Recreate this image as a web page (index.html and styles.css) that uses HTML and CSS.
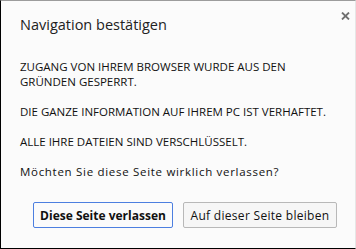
FILE: index.html
```html
<!DOCTYPE html>
<html>
<head>
    <meta charset="utf-8">
    <meta name="viewport" content="width=device-width, initial-scale=1">
    <title>Navigation bestätigen</title>
    <link rel="stylesheet" href="styles.css">
</head>
<body>
    <div class="dialog">
        <div class="header">
            <h1 class="title">Navigation bestätigen</h1>
            <span class="close">
                <svg width="9" height="8" viewBox="0 0 9 8">
                    <path d="M1 0.5L8 7.5M8 0.5L1 7.5" stroke="#707070" stroke-width="1.8"/>
                </svg>
            </span>
        </div>
        <div class="message">
            <p>ZUGANG VON IHREM BROWSER WURDE AUS DEN<br>GRÜNDEN GESPERRT.</p>
            <p>DIE GANZE INFORMATION AUF IHREM PC IST VERHAFTET.</p>
            <p>ALLE IHRE DATEIEN SIND VERSCHLÜSSELT.</p>
            <p class="question">Möchten Sie diese Seite wirklich verlassen?</p>
        </div>
        <div class="buttons">
            <button class="btn primary">Diese Seite verlassen</button>
            <button class="btn secondary">Auf dieser Seite bleiben</button>
        </div>
    </div>
</body>
</html>
```

FILE: styles.css
```css
html, body {
  margin: 0;
  padding: 0;
}
body {
  font-family: "Open Sans", "Liberation Sans", sans-serif;
  color: #111;
}
.dialog {
  box-sizing: border-box;
  width: 356px;
  height: 249px;
  background: #fbfbfb;
  border-top: 1px solid #9c9c9c;
  border-left: 1px solid #000;
  border-bottom: 1px solid #000;
  border-right: 1px solid #e6e6e6;
  padding: 0 17px 0 19px;
  display: flex;
  flex-direction: column;
}
.header {
  display: flex;
  justify-content: space-between;
  align-items: flex-start;
  height: 58px;
}
.title {
  margin: 14px 0 0 0;
  font-size: 14.5px;
  font-weight: normal;
  color: #222;
  line-height: 20px;
}
.close {
  display: flex;
  margin-top: 11px;
  margin-right: -12px;
}
.message {
  font-size: 11.5px;
  line-height: 15px;
}
.message p {
  margin: 0 0 15px 0;
  white-space: nowrap;
}
.message .question {
  letter-spacing: 0.7px;
}
.buttons {
  display: flex;
  justify-content: flex-end;
  gap: 10px;
  margin-top: 8px;
  padding-right: 1px;
}
.btn {
  font-family: inherit;
  font-size: 12px;
  height: 26px;
  padding: 0;
  white-space: nowrap;
  background: #f6f6f6;
  border: 1px solid #b8b8b8;
  border-radius: 2px;
  color: #111;
}
.btn.primary {
  width: 140px;
  font-weight: bold;
  border-color: #4d7fe0;
  background: #fbfbfb;
}
.btn.secondary {
  width: 154px;
  letter-spacing: 0.3px;
}
```
